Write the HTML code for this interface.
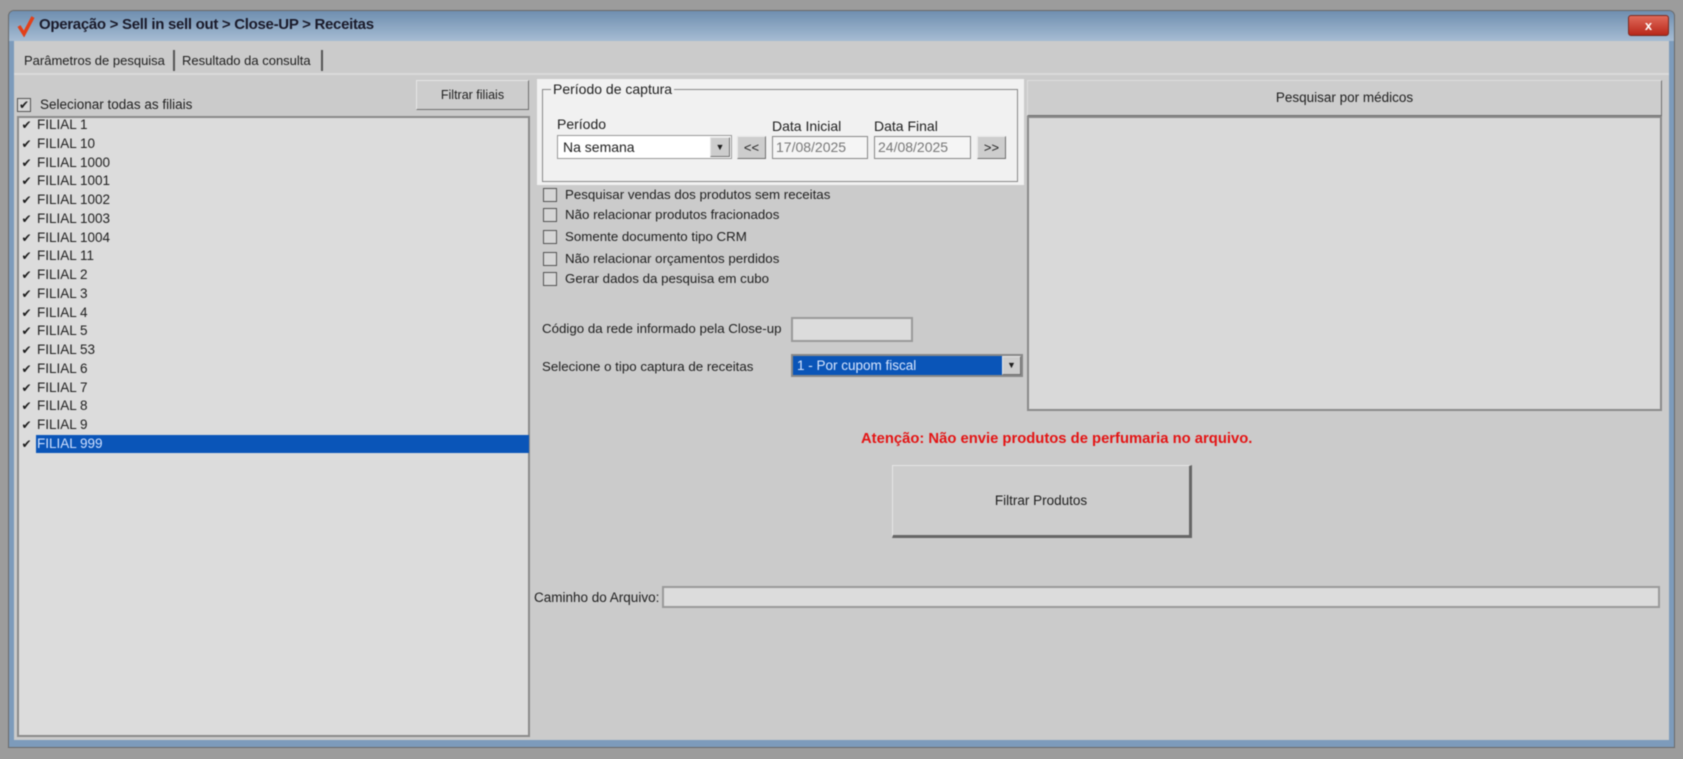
<!DOCTYPE html>
<html><head><meta charset="utf-8"><style>
*{margin:0;padding:0;box-sizing:border-box}
body{width:1683px;height:759px;background:#9c9c9c;font-family:"Liberation Sans",sans-serif;font-size:13px;color:#1e1e1e;position:relative;overflow:hidden;filter:blur(0.5px)}
.a{position:absolute}
.win{left:8px;top:10px;width:1667px;height:738px;background:#7d9bbb;border:1px solid #6a6a6a;border-radius:6px 6px 0 0}
.title{left:9px;top:11px;width:1665px;height:30px;background:linear-gradient(#6f8fb0,#a6bcd3);border-radius:5px 5px 0 0}
.body{left:14px;top:41px;width:1655px;height:699px;background:#cbcbcb}
.inp{background:#dcdcdc;border:1px solid #8a8a8a;border-top-color:#6d6d6d}
.btn{background:#cdcdcd;border:1px solid #e6e6e6;border-right-color:#6f6f6f;border-bottom-color:#6f6f6f;text-align:center}
.cb{width:14px;height:14px;border:1px solid #555;background:#d6d6d6}
.row{left:20px;height:19px;line-height:19px;font-size:13.5px;width:509px}
.row span.k{display:inline-block;width:13px;font-size:12px;text-align:center;margin-right:4px}
</style></head><body>
<div class="a win"></div>
<div class="a title"></div>
<svg class="a" style="left:17px;top:15px" width="18" height="22"><path d="M2 11 L7 19 L16 2" stroke="#e2401a" stroke-width="3.5" fill="none"/></svg>
<div class="a" style="left:39px;top:16px;font-size:15px;color:#1a1a2a;font-weight:bold;letter-spacing:-0.3px">Operação &gt; Sell in sell out &gt; Close-UP &gt; Receitas</div>
<div class="a" style="left:1628px;top:15px;width:41px;height:21px;background:linear-gradient(#e06a5a,#b8271a);border:1px solid #7a2a20;border-radius:3px;color:#fff;text-align:center;font-weight:bold;font-size:13px;line-height:19px">x</div>
<div class="a body"></div>
<div class="a" style="left:24px;top:53px;font-size:13px">Parâmetros de pesquisa</div>
<div class="a" style="left:173px;top:50px;width:2px;height:21px;background:#555"></div>
<div class="a" style="left:182px;top:53px;font-size:13px">Resultado da consulta</div>
<div class="a" style="left:321px;top:50px;width:2px;height:21px;background:#555"></div>
<div class="a" style="left:14px;top:73px;width:1655px;height:2px;background:#dadada"></div>
<div class="a cb" style="left:17px;top:98px;font-size:12px;line-height:12px;text-align:center">✔</div>
<div class="a" style="left:40px;top:97px;font-size:13.5px">Selecionar todas as filiais</div>
<div class="a btn" style="left:416px;top:80px;width:113px;height:30px;line-height:28px;font-size:12.5px">Filtrar filiais</div>
<div class="a inp" style="left:17px;top:116px;width:513px;height:621px;border:2px solid #8a8a8a"></div>
<div class="a row" style="top:115px"><span class="k">✔</span>FILIAL 1</div>
<div class="a row" style="top:134px"><span class="k">✔</span>FILIAL 10</div>
<div class="a row" style="top:153px"><span class="k">✔</span>FILIAL 1000</div>
<div class="a row" style="top:171px"><span class="k">✔</span>FILIAL 1001</div>
<div class="a row" style="top:190px"><span class="k">✔</span>FILIAL 1002</div>
<div class="a row" style="top:209px"><span class="k">✔</span>FILIAL 1003</div>
<div class="a row" style="top:228px"><span class="k">✔</span>FILIAL 1004</div>
<div class="a row" style="top:246px"><span class="k">✔</span>FILIAL 11</div>
<div class="a row" style="top:265px"><span class="k">✔</span>FILIAL 2</div>
<div class="a row" style="top:284px"><span class="k">✔</span>FILIAL 3</div>
<div class="a row" style="top:303px"><span class="k">✔</span>FILIAL 4</div>
<div class="a row" style="top:321px"><span class="k">✔</span>FILIAL 5</div>
<div class="a row" style="top:340px"><span class="k">✔</span>FILIAL 53</div>
<div class="a row" style="top:359px"><span class="k">✔</span>FILIAL 6</div>
<div class="a row" style="top:378px"><span class="k">✔</span>FILIAL 7</div>
<div class="a row" style="top:396px"><span class="k">✔</span>FILIAL 8</div>
<div class="a row" style="top:415px"><span class="k">✔</span>FILIAL 9</div>
<div class="a" style="left:36px;top:435px;width:493px;height:18px;background:#0a55b8"></div>
<div class="a row" style="top:434px"><span class="k">✔</span><span style="color:#cfe0ff">FILIAL 999</span></div>
<div class="a" style="left:537px;top:79px;width:487px;height:106px;background:#f1f1f1"></div>
<div class="a" style="left:542px;top:89px;width:476px;height:93px;border:1px solid #888"></div>
<div class="a" style="left:551px;top:81px;background:#f1f1f1;padding:0 2px;font-size:14px">Período de captura</div>
<div class="a" style="left:557px;top:116px;font-size:14px">Período</div>
<div class="a" style="left:557px;top:135px;width:175px;height:24px;background:#fff;border:1px solid #999;font-size:14px;line-height:22px;padding-left:5px">Na semana</div>
<div class="a btn" style="left:710px;top:137px;width:20px;height:20px;font-size:9px;line-height:18px">▼</div>
<div class="a btn" style="left:737px;top:136px;width:29px;height:23px;line-height:21px;font-size:13px">&lt;&lt;</div>
<div class="a" style="left:772px;top:118px;font-size:14px">Data Inicial</div>
<div class="a" style="left:772px;top:136px;width:96px;height:23px;border:1px solid #888;background:#f5f5f5;color:#777;font-size:14px;line-height:21px;padding-left:3px">17/08/2025</div>
<div class="a" style="left:874px;top:118px;font-size:14px">Data Final</div>
<div class="a" style="left:874px;top:136px;width:97px;height:23px;border:1px solid #888;background:#f5f5f5;color:#777;font-size:14px;line-height:21px;padding-left:3px">24/08/2025</div>
<div class="a btn" style="left:977px;top:136px;width:29px;height:23px;line-height:21px;font-size:13px">&gt;&gt;</div>
<div class="a cb" style="left:543px;top:188px"></div><div class="a" style="left:565px;top:187px;font-size:13.3px">Pesquisar vendas dos produtos sem receitas</div>
<div class="a cb" style="left:543px;top:208px"></div><div class="a" style="left:565px;top:207px;font-size:13.3px">Não relacionar produtos fracionados</div>
<div class="a cb" style="left:543px;top:230px"></div><div class="a" style="left:565px;top:229px;font-size:13.3px">Somente documento tipo CRM</div>
<div class="a cb" style="left:543px;top:252px"></div><div class="a" style="left:565px;top:251px;font-size:13.3px">Não relacionar orçamentos perdidos</div>
<div class="a cb" style="left:543px;top:272px"></div><div class="a" style="left:565px;top:271px;font-size:13.3px">Gerar dados da pesquisa em cubo</div>
<div class="a" style="left:542px;top:321px;font-size:13.3px">Código da rede informado pela Close-up</div>
<div class="a inp" style="left:791px;top:317px;width:122px;height:25px;border:2px solid #9a9a9a"></div>
<div class="a" style="left:542px;top:359px;font-size:13.3px">Selecione o tipo captura de receitas</div>
<div class="a" style="left:791px;top:354px;width:232px;height:23px;border:2px solid #888;background:#0a55b8;color:#d8e6ff;font-size:13.5px;line-height:19px;padding-left:4px">1 - Por cupom fiscal</div>
<div class="a btn" style="left:1002px;top:356px;width:19px;height:19px;font-size:9px;line-height:17px">▼</div>
<div class="a btn" style="left:1027px;top:80px;width:635px;height:36px;line-height:34px;font-size:13.5px;border-color:#dedede #6f6f6f #6f6f6f #dedede">Pesquisar por médicos</div>
<div class="a inp" style="left:1027px;top:116px;width:635px;height:295px;border:2px solid #8a8a8a;background:#d9d9d9"></div>
<div class="a" style="left:861px;top:431px;font-size:14.8px;font-weight:bold;color:#e41414">Atenção: Não envie produtos de perfumaria no arquivo.</div>
<div class="a btn" style="left:892px;top:465px;width:300px;height:73px;line-height:70px;font-size:13.5px;border-right:3px solid #666;border-bottom:3px solid #666">Filtrar Produtos</div>
<div class="a" style="left:534px;top:590px;font-size:13.5px">Caminho do Arquivo:</div>
<div class="a inp" style="left:662px;top:586px;width:998px;height:22px;border:2px solid #9a9a9a"></div>
</body></html>
